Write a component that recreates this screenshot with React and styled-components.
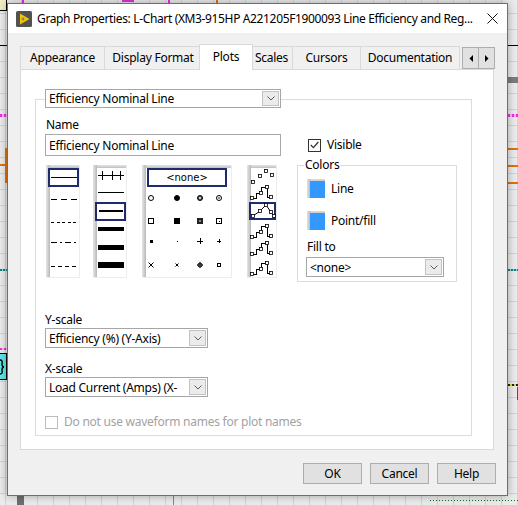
import React from 'react';
import styled, { createGlobalStyle } from 'styled-components';

const FONT = `"Noto Sans", "Open Sans", sans-serif`;

const GlobalStyle = createGlobalStyle`
  html, body { margin: 0; padding: 0; }
  body { font-family: ${FONT}; font-size: 12px; letter-spacing: -0.25px; color: #000; }
  * { box-sizing: border-box; }
`;

/* ---------- background block diagram ---------- */
const Desktop = styled.div`
  position: relative;
  width: 518px;
  height: 505px;
  overflow: hidden;
  padding: 3px 0 0 7px;
  background-color: #ececec;
  background-image:
    linear-gradient(to bottom, #d3d3d3 1px, transparent 1px),
    linear-gradient(to right, #d3d3d3 1px, transparent 1px);
  background-size: 16px 16px;
  background-position: 0 13px, 5px 0;
`;

const Wire = styled.div`
  position: absolute;
  left: ${(p) => p.$x}px;
  top: ${(p) => p.$y}px;
  width: ${(p) => p.$w}px;
  height: ${(p) => p.$h}px;
  background: ${(p) => p.$bg};
`;

const Terminal = styled.div`
  position: absolute;
  left: -2px;
  top: 353px;
  width: 9px;
  height: 27px;
  background: #5fe6e8;
  border: 1px solid #000;
  display: flex;
  align-items: center;
`;

const Constant = styled.div`
  position: absolute;
  left: -2px;
  top: -2px;
  width: 9px;
  height: 13px;
  background: #f3eec4;
  border: 1px solid #000;
`;

const PINK = 'repeating-linear-gradient(90deg, #ef2fe3 0 2px, #fbb7f6 2px 4px)';
const TEAL = 'repeating-linear-gradient(90deg, #0b8585 0 2px, #9fd3d3 2px 3px)';
const ORANGE = '#e0720e';
const YB = 'repeating-linear-gradient(90deg, #222 0 2px, #e8d42a 2px 4px)';
const GREENDOT = 'repeating-linear-gradient(90deg, #1b6b1b 0 1px, transparent 1px 3px)';

const wires = [
  { x: 0, y: 45, w: 7, h: 1, bg: '#000' },
  { x: 0, y: 114, w: 7, h: 3, bg: PINK },
  { x: 5, y: 148, w: 2, h: 35, bg: ORANGE },
  { x: 0, y: 164, w: 5, h: 2, bg: ORANGE },
  { x: 0, y: 269, w: 7, h: 2, bg: TEAL },
  { x: 0, y: 348, w: 7, h: 2, bg: PINK },
  { x: 508, y: 45, w: 10, h: 1, bg: '#000' },
  { x: 508, y: 77, w: 10, h: 6, bg: '#7b7b7b' },
  { x: 508, y: 114, w: 10, h: 3, bg: PINK },
  { x: 508, y: 148, w: 10, h: 2, bg: ORANGE },
  { x: 508, y: 165, w: 10, h: 2, bg: ORANGE },
  { x: 508, y: 182, w: 10, h: 2, bg: ORANGE },
  { x: 508, y: 269, w: 10, h: 2, bg: TEAL },
  { x: 508, y: 384, w: 10, h: 2, bg: YB },
  { x: 517, y: 387, w: 1, h: 13, bg: '#1d7a1d' },
  { x: 430, y: 500, w: 88, h: 1, bg: GREENDOT },
  { x: 17, y: 496, w: 7, h: 9, bg: '#6f6f6f' },
  { x: 173, y: 496, w: 1, h: 9, bg: ORANGE },
  { x: 22, y: 0, w: 2, h: 3, bg: '#e62fdc' },
  { x: 122, y: 0, w: 12, h: 2, bg: '#e62fdc' },
  { x: 168, y: 0, w: 2, h: 3, bg: '#e62fdc' },
  { x: 216, y: 0, w: 2, h: 3, bg: ORANGE },
];

/* ---------- window ---------- */
const Window = styled.div`
  position: relative;
  z-index: 1;
  width: 501px;
  height: 493px;
  border: 1px solid #2b7cd3;
  background: #f0f0f0;
  box-shadow: 0 0 9px rgba(0, 0, 0, 0.32);
  display: flex;
  flex-direction: column;
`;

const TitleBar = styled.div`
  flex: none;
  height: 29px;
  background: #fff;
  display: flex;
  align-items: center;
  padding-left: 8px;
`;

const TitleText = styled.div`
  flex: 1;
  margin-left: 5px;
  white-space: nowrap;
  overflow: hidden;
  font-size: 12px;
  letter-spacing: -0.36px;
`;

const CloseButton = styled.div`
  flex: none;
  width: 30px;
  height: 29px;
  display: flex;
  align-items: center;
  justify-content: center;
`;

const Body = styled.div`
  flex: 1;
  display: flex;
  flex-direction: column;
  padding: 11px 13px 0 12px;
`;

const TabStrip = styled.div`
  position: relative;
  z-index: 2;
  height: 25px;
  display: flex;
  align-items: flex-end;
`;

const Tab = styled.div`
  flex: none;
  position: relative;
  z-index: ${(p) => (p.$active ? 2 : 1)};
  width: ${(p) => p.$w}px;
  height: ${(p) => (p.$active ? 26 : 23)}px;
  margin-left: ${(p) => p.$ml}px;
  margin-bottom: ${(p) => (p.$active ? -1 : 0)}px;
  padding-bottom: ${(p) => (p.$active ? 3 : 1)}px;
  border: 1px solid #d9d9d9;
  border-bottom: none;
  background: ${(p) => (p.$active ? '#fff' : '#f0f0f0')};
  display: flex;
  align-items: center;
  justify-content: center;
  white-space: nowrap;
`;

const ScrollArrows = styled.div`
  margin-left: auto;
  margin-right: -1px;
  align-self: flex-start;
  margin-top: 3px;
  display: flex;
`;

const ArrowButton = styled.div`
  width: 17px;
  height: 22px;
  margin-left: ${(p) => (p.$first ? 0 : -1)}px;
  border: 1px solid #adadad;
  background: #e1e1e1;
  display: flex;
  align-items: center;
  justify-content: center;
`;

const Panel = styled.div`
  position: relative;
  z-index: 1;
  height: 381px;
  border: 1px solid #d9d9d9;
  background: #fff;
  display: flex;
  flex-direction: column;
`;

const GroupBox = styled.div`
  position: relative;
  flex: 1;
  margin: 29px 21px 13px 14px;
  border: 1px solid #dcdcdc;
  padding: 17px 0 0 9px;
  display: flex;
`;

const LeftCol = styled.div`
  width: 236px;
  display: flex;
  flex-direction: column;
`;

const RightCol = styled.div`
  width: 160px;
  margin-left: 16px;
  display: flex;
  flex-direction: column;
`;

const Label = styled.div`
  height: 16px;
  line-height: 16px;
  margin-top: ${(p) => p.$mt || 0}px;
  margin-left: ${(p) => p.$ml || 0}px;
  white-space: nowrap;
`;

const TextBox = styled.div`
  margin-top: 1px;
  width: 236px;
  height: 22px;
  border: 1px solid #a8a8a8;
  padding-left: 3px;
  display: flex;
  align-items: center;
  white-space: nowrap;
`;

const Combo = styled.div`
  display: flex;
  align-items: stretch;
  width: ${(p) => p.$w}px;
  height: ${(p) => p.$h}px;
  margin-left: ${(p) => p.$ml || 0}px;
  margin-top: ${(p) => p.$mt || 0}px;
  border: 1px solid #a6a6a6;
  background: #fff;
  padding: 1px;
  flex: none;
`;

const LegendCombo = styled(Combo)`
  position: absolute;
  top: -11px;
  left: 9px;
`;

const ComboText = styled.div`
  flex: 1;
  padding-left: 2px;
  display: flex;
  align-items: center;
  white-space: nowrap;
  overflow: hidden;
`;

const ComboButton = styled.div`
  width: 17px;
  border: 1px solid #c3c3c3;
  background: #ebebeb;
  display: flex;
  align-items: center;
  justify-content: center;
`;

const StylesRow = styled.div`
  margin-top: 9px;
  margin-left: 1px;
  display: flex;
`;

const StyleBox = styled.div`
  flex: none;
  width: ${(p) => p.$w}px;
  height: 113px;
  margin-left: ${(p) => p.$ml || 0}px;
  background:
    linear-gradient(to right, #e6e6e6, #b8b8b8) left top / 4px 100% no-repeat,
    linear-gradient(to bottom, #e6e6e6, #c0c0c0) left top / 100% 3px no-repeat,
    #fff;
  box-shadow: inset -1px -1px 0 #ededed;
  display: flex;
  flex-direction: column;
  svg { display: block; }
`;

const NoneBox = styled.div`
  margin: 3px 0 0 5px;
  width: 80px;
  height: 19px;
  border: 2px solid #202c6a;
  display: flex;
  align-items: center;
  justify-content: center;
  font-family: "DejaVu Sans", sans-serif;
  font-size: 10px;
  letter-spacing: 0;
`;

const CheckRow = styled.div`
  display: flex;
  align-items: center;
  height: 16px;
  line-height: 16px;
  margin-top: ${(p) => p.$mt}px;
  margin-left: ${(p) => p.$ml || 0}px;
  color: ${(p) => (p.$disabled ? '#a2a2a2' : '#000')};
  white-space: nowrap;
`;

const CheckBox = styled.div`
  flex: none;
  width: 13px;
  height: 13px;
  margin-right: ${(p) => p.$gap}px;
  border: 1px solid ${(p) => (p.$disabled ? '#bcbcbc' : '#333')};
  background: #fff;
  display: flex;
  align-items: center;
  justify-content: center;
`;

const ColorsBox = styled.div`
  position: relative;
  margin-top: 12px;
  width: 160px;
  height: 117px;
  border: 1px solid #dcdcdc;
  padding: 13px 0 0 9px;
  display: flex;
  flex-direction: column;
`;

const ColorsLegend = styled.div`
  position: absolute;
  top: -8px;
  left: 6px;
  padding: 0 1px;
  background: #fff;
  line-height: 14px;
`;

const SwatchRow = styled.div`
  display: flex;
  align-items: center;
  margin-top: ${(p) => p.$mt || 0}px;
`;

const Swatch = styled.div`
  width: 18px;
  height: 19px;
  margin-right: 6px;
  background:
    linear-gradient(to right, #e2e2e2, #bdbdbd) left top / 3px 100% no-repeat,
    linear-gradient(to bottom, #e2e2e2, #c6c6c6) left top / 100% 2px no-repeat,
    ${(p) => p.$color};
`;

const ButtonRow = styled.div`
  margin-top: 13px;
  margin-right: -2px;
  display: flex;
  justify-content: flex-end;
  gap: 8px;
`;

const Button = styled.div`
  width: 59px;
  height: 21px;
  border: 1px solid #adadad;
  background: #e1e1e1;
  display: flex;
  align-items: center;
  justify-content: center;
`;

/* ---------- drawings ---------- */
const Chevron = () => (
  <svg width="8" height="5" viewBox="0 0 8 5">
    <path d="M0.5 0.5 L4 4 L7.5 0.5" stroke="#5a5a5a" fill="none" />
  </svg>
);

const LabviewIcon = () => (
  <svg width="16" height="16" viewBox="0 0 16 16">
    <rect x="0" y="0" width="16" height="16" rx="1.5" fill="#525252" />
    <path d="M4 2.5 L13.5 8 L4 13.5 Z" fill="#f5c400" />
    <path d="M5.5 8 H8.5 M7 6.5 V9.5" stroke="#5d6c8a" strokeWidth="1" />
  </svg>
);

const CloseIcon = () => (
  <svg width="11" height="11" viewBox="0 0 11 11">
    <path d="M0.5 0.5 L10.5 10.5 M10.5 0.5 L0.5 10.5" stroke="#111" strokeWidth="1" />
  </svg>
);

const Check = () => (
  <svg width="9" height="8" viewBox="0 0 9 8">
    <path d="M0.8 4 L3.4 6.6 L8.3 1" stroke="#333" strokeWidth="1.3" fill="none" />
  </svg>
);

const NAVY = '#202c6a';

const LineStyles = () => (
  <svg width="34" height="113" viewBox="0 0 34 113" shapeRendering="crispEdges">
    <rect x="3" y="4" width="29" height="17" fill="none" stroke={NAVY} strokeWidth="2" />
    <line x1="5" y1="12.5" x2="31" y2="12.5" stroke="#000" />
    <line x1="5" y1="34.5" x2="31" y2="34.5" stroke="#000" strokeDasharray="6 4" />
    <line x1="5" y1="57.5" x2="31" y2="57.5" stroke="#000" strokeDasharray="3 2.5" />
    <line x1="5" y1="77.5" x2="31" y2="77.5" stroke="#000" strokeDasharray="6 3 2 3" />
    <line x1="5" y1="101.5" x2="31" y2="101.5" stroke="#000" strokeDasharray="4 3" />
  </svg>
);

const LineWidths = () => (
  <svg width="34" height="113" viewBox="0 0 34 113" shapeRendering="crispEdges">
    <line x1="5" y1="10.5" x2="31" y2="10.5" stroke="#000" />
    <line x1="9.5" y1="6" x2="9.5" y2="15" stroke="#000" />
    <line x1="19.5" y1="6" x2="19.5" y2="15" stroke="#000" />
    <line x1="27.5" y1="6" x2="27.5" y2="15" stroke="#000" />
    <line x1="5" y1="27.5" x2="31" y2="27.5" stroke="#000" />
    <rect x="3" y="38" width="29" height="17" fill="none" stroke={NAVY} strokeWidth="2" />
    <line x1="6" y1="46" x2="30" y2="46" stroke="#000" strokeWidth="2" />
    <line x1="5" y1="64" x2="31" y2="64" stroke="#000" strokeWidth="4" />
    <line x1="5" y1="82.5" x2="31" y2="82.5" stroke="#000" strokeWidth="5" />
    <line x1="5" y1="100" x2="31" y2="100" stroke="#000" strokeWidth="6" />
  </svg>
);

const PointStyles = () => {
  const cx = [9, 35, 58, 77];
  const cy = [34, 57, 77, 101];
  return (
    <svg width="90" height="90" viewBox="0 23 90 90">
      <g fill="none" stroke="#000" strokeWidth="1">
        <circle cx={cx[0]} cy={cy[0]} r="2.5" />
        <circle cx={cx[1]} cy={cy[0]} r="2.5" fill="#000" />
        <circle cx={cx[2]} cy={cy[0]} r="2.5" fill="#555" />
        <circle cx={cx[2]} cy={cy[0]} r="0.9" fill="#fff" stroke="none" />
        <circle cx={cx[3]} cy={cy[0]} r="2.5" />
        <circle cx={cx[3]} cy={cy[0]} r="0.8" fill="#000" stroke="none" />
      </g>
      <g shapeRendering="crispEdges">
        <rect x={cx[0] - 2.5} y={cy[1] - 2.5} width="5" height="5" fill="none" stroke="#000" />
        <rect x={cx[1] - 3} y={cy[1] - 3} width="6" height="6" fill="#000" />
        <rect x={cx[2] - 3} y={cy[1] - 3} width="6" height="6" fill="#222" />
        <rect x={cx[2] - 1} y={cy[1] - 1} width="2" height="2" fill="#888" />
        <rect x={cx[3] - 2.5} y={cy[1] - 2.5} width="5" height="5" fill="none" stroke="#000" />
        <rect x={cx[3] - 0.5} y={cy[1] - 0.5} width="1" height="1" fill="#000" />
        <rect x={cx[0] - 1.5} y={cy[2] - 1.5} width="3" height="3" fill="#000" />
        <rect x={cx[1] - 0.5} y={cy[2] - 0.5} width="1" height="1" fill="#000" />
        <path d={`M${cx[2] - 3} ${cy[2] + 0.5} h6 M${cx[2] + 0.5} ${cy[2] - 3} v6`} stroke="#000" />
        <path d={`M${cx[3] - 2} ${cy[2] + 0.5} h4 M${cx[3] + 0.5} ${cy[2] - 2} v4`} stroke="#000" />
        <rect x={cx[3] - 1.5} y={cy[3] - 1.5} width="3" height="3" fill="none" stroke="#000" />
      </g>
      <g stroke="#000" fill="none">
        <path d={`M${cx[0] - 2.5} ${cy[3] - 2.5} l5 5 M${cx[0] + 2.5} ${cy[3] - 2.5} l-5 5`} />
        <path d={`M${cx[1] - 1.5} ${cy[3] - 1.5} l3 3 M${cx[1] + 1.5} ${cy[3] - 1.5} l-3 3`} />
        <circle cx={cx[2]} cy={cy[3]} r="2" />
        <path d={`M${cx[2] - 3} ${cy[3]} h6 M${cx[2]} ${cy[3] - 3} v6`} />
      </g>
    </svg>
  );
};

const Pt = ({ x, y }) => (
  <rect x={x - 1.5} y={y - 1.5} width="3" height="3" fill="#fff" stroke="#000" strokeWidth="0.8" />
);

const stepGlyph = (oy) => [
  [5, oy + 14],
  [9, oy + 14],
  [9, oy + 9],
  [14, oy + 9],
  [14, oy + 3],
  [20, oy + 3],
  [20, oy + 13],
  [24, oy + 13],
];

const Interp = () => {
  const rows = [stepGlyph(19), stepGlyph(58), stepGlyph(75), stepGlyph(95)];
  return (
    <svg width="30" height="113" viewBox="0 0 30 113">
      {[
        [6, 17],
        [13, 11],
        [19, 6],
        [25, 10],
      ].map(([x, y], i) => (
        <Pt key={'s' + i} x={x} y={y} />
      ))}
      <rect x="3" y="38" width="25" height="16" fill="none" stroke={NAVY} strokeWidth="2" shapeRendering="crispEdges" />
      <polyline points="6,51 13,46 19,40 24,47 27,51" fill="none" stroke="#000" strokeWidth="1" />
      {[
        [6, 51],
        [13, 46],
        [19, 40],
        [24, 47],
        [27, 51],
      ].map(([x, y], i) => (
        <Pt key={'l' + i} x={x} y={y} />
      ))}
      {rows.map((pts, r) => (
        <g key={'r' + r}>
          <polyline points={pts.map((p) => p.join(',')).join(' ')} fill="none" stroke="#000" strokeWidth="1" shapeRendering="crispEdges" />
          {[pts[0], pts[3], pts[5], pts[7]].map(([x, y], i) => (
            <Pt key={i} x={x} y={y} />
          ))}
        </g>
      ))}
    </svg>
  );
};

const ArrowLeft = () => (
  <svg width="4" height="7" viewBox="0 0 4 7">
    <path d="M4 0 L0.5 3.5 L4 7 Z" fill="#000" />
  </svg>
);
const ArrowRight = () => (
  <svg width="4" height="7" viewBox="0 0 4 7">
    <path d="M0 0 L3.5 3.5 L0 7 Z" fill="#000" />
  </svg>
);

const tabs = [
  { label: 'Appearance', w: 85, ml: 0 },
  { label: 'Display Format', w: 98, ml: -1 },
  { label: 'Plots', w: 54, ml: -3, active: true },
  { label: 'Scales', w: 43, ml: -3 },
  { label: 'Cursors', w: 69, ml: -1 },
  { label: 'Documentation', w: 100, ml: -1 },
];

export default function App() {
  return (
    <>
      <GlobalStyle />
      <Desktop>
        {wires.map((w, i) => (
          <Wire key={i} $x={w.x} $y={w.y} $w={w.w} $h={w.h} $bg={w.bg} />
        ))}
        <Constant />
        <Terminal>
          <svg width="6" height="16" viewBox="0 0 6 16">
            <path d="M1 1 Q4 1 3 5 Q3 8 5 8 Q3 8 3 11 Q4 15 1 15" stroke="#000" strokeWidth="1.4" fill="none" />
          </svg>
        </Terminal>

        <Window>
          <TitleBar>
            <LabviewIcon />
            <TitleText>
              Graph Properties: L-Chart (XM3-915HP A221205F1900093 Line Efficiency and Reg...
            </TitleText>
            <CloseButton>
              <CloseIcon />
            </CloseButton>
          </TitleBar>

          <Body>
            <TabStrip>
              {tabs.map((t) => (
                <Tab key={t.label} $w={t.w} $ml={t.ml} $active={t.active}>
                  {t.label}
                </Tab>
              ))}
              <ScrollArrows>
                <ArrowButton $first>
                  <ArrowLeft />
                </ArrowButton>
                <ArrowButton>
                  <ArrowRight />
                </ArrowButton>
              </ScrollArrows>
            </TabStrip>

            <Panel>
              <GroupBox>
                <LegendCombo $w={236} $h={19}>
                  <ComboText>Efficiency Nominal Line</ComboText>
                  <ComboButton>
                    <Chevron />
                  </ComboButton>
                </LegendCombo>

                <LeftCol>
                  <Label $ml={1}>Name</Label>
                  <TextBox>Efficiency Nominal Line</TextBox>

                  <StylesRow>
                    <StyleBox $w={34}>
                      <LineStyles />
                    </StyleBox>
                    <StyleBox $w={34} $ml={13}>
                      <LineWidths />
                    </StyleBox>
                    <StyleBox $w={90} $ml={15}>
                      <NoneBox>&lt;none&gt;</NoneBox>
                      <PointStyles />
                    </StyleBox>
                    <StyleBox $w={30} $ml={15}>
                      <Interp />
                    </StyleBox>
                  </StylesRow>

                  <Label $mt={34}>Y-scale</Label>
                  <Combo $w={163} $h={20}>
                    <ComboText>Efficiency (%) (Y-Axis)</ComboText>
                    <ComboButton>
                      <Chevron />
                    </ComboButton>
                  </Combo>

                  <Label $mt={13}>X-scale</Label>
                  <Combo $w={163} $h={20}>
                    <ComboText>Load Current (Amps) (X-</ComboText>
                    <ComboButton>
                      <Chevron />
                    </ComboButton>
                  </Combo>

                  <CheckRow $mt={17} $disabled>
                    <CheckBox $disabled $gap={6} />
                    Do not use waveform names for plot names
                  </CheckRow>
                </LeftCol>

                <RightCol>
                  <CheckRow $mt={20} $ml={11}>
                    <CheckBox $gap={6}>
                      <Check />
                    </CheckBox>
                    Visible
                  </CheckRow>

                  <ColorsBox>
                    <ColorsLegend>Colors</ColorsLegend>
                    <SwatchRow>
                      <Swatch $color="#3399ff" />
                      Line
                    </SwatchRow>
                    <SwatchRow $mt={13}>
                      <Swatch $color="#3399ff" />
                      Point/fill
                    </SwatchRow>
                    <Label $mt={9}>Fill to</Label>
                    <Combo $w={138} $h={20} $ml={-1} $mt={2}>
                      <ComboText>&lt;none&gt;</ComboText>
                      <ComboButton>
                        <Chevron />
                      </ComboButton>
                    </Combo>
                  </ColorsBox>
                </RightCol>
              </GroupBox>
            </Panel>

            <ButtonRow>
              <Button>OK</Button>
              <Button>Cancel</Button>
              <Button>Help</Button>
            </ButtonRow>
          </Body>
        </Window>
      </Desktop>
    </>
  );
}
